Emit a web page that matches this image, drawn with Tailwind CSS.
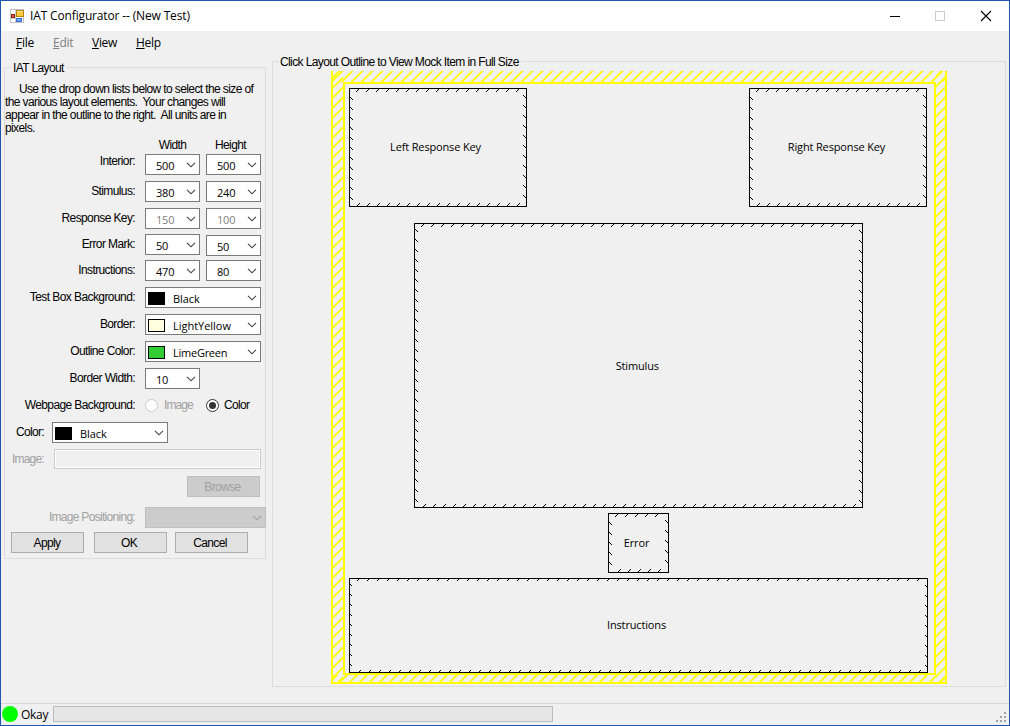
<!DOCTYPE html>
<html lang="en">
<head>
<meta charset="utf-8">
<title>IAT Configurator -- (New Test)</title>
<script src="https://cdn.jsdelivr.net/npm/@tailwindcss/browser@4"></script>
</head>
<body class="w-[1010px] h-[726px] overflow-hidden bg-[#f0f0f0] text-black">
<svg class="hidden">
  <symbol id="chev" viewBox="0 0 10 6"><path d="M1 .8 5 4.8 9 .8" fill="none" stroke="currentColor" stroke-width="1.15"/></symbol>
</svg>
<div class="flex flex-col w-full h-full border border-[#1c56ad]">
  <header class="flex items-center h-[30px] bg-white pl-[9px] shrink-0">
    <svg class="w-[14px] h-[14px] shrink-0" viewBox="0 0 14 14">
      <rect x=".5" y=".5" width="13" height="13" fill="#fff" stroke="#c3c3c3"/>
      <path d="M5.5 1v12M1 9.500h12" stroke="#d0d0d0"/>
      <rect x="6.500" y="1.500" width="7" height="6" fill="#fbc93d" stroke="#b8860b"/>
      <path d="M7 2.500h5" stroke="#ffeeb0"/>
      <rect x="1.500" y="5.500" width="3" height="3" fill="#e0604a" stroke="#8e1d12"/>
      <rect x="6.500" y="9.500" width="5" height="3" fill="#6fa3f5" stroke="#3a6fd0"/>
    </svg>
    <h1 class="ml-[6px] font-['Open_Sans',sans-serif] text-[12px] leading-[16px] tracking-[-0.15px] whitespace-nowrap">IAT Configurator -- (New Test)</h1>
    <svg class="ml-auto mr-[17px] w-[103px] h-[12px]" viewBox="889 9 103 12" shape-rendering="crispEdges">
      <path d="M890 15.500h10" stroke="#000"/>
      <rect x="935.500" y="10.500" width="9" height="9" fill="none" stroke="#ccc"/>
      <path d="M981 10l10 10M991 10l-10 10" stroke="#000" stroke-width="1.100" shape-rendering="auto"/>
    </svg>
  </header>

  <nav class="flex h-[24px] items-center shrink-0 pl-[15px] font-['Open_Sans',sans-serif] text-[12px] leading-[16px] tracking-[-0.28px]">
    <span class="w-[37px]"><u>F</u>ile</span>
    <span class="w-[39px] text-[#808080]"><u>E</u>dit</span>
    <span class="w-[44px]"><u>V</u>iew</span>
    <span><u>H</u>elp</span>
  </nav>

  <main class="flex items-start flex-1 min-h-0 font-['Liberation_Sans',Arial,sans-serif] text-[12px] leading-[13px] tracking-[-0.61px]">
    <fieldset class="ml-[3px] mt-[6px] w-[262px] h-[498px] border border-[#dcdcdc]">
      <legend class="h-[13px] ml-[6px] px-[2px] pt-px">IAT Layout</legend>
      <p class="mt-[9px] whitespace-pre"><span class="pl-[3px]"></span>    Use the drop down lists below to select the size of
the various layout elements.  Your changes will
appear in the outline to the right.  All units are in
pixels.</p>
      <div class="flex mt-[3px] h-[14px] items-center pl-[140px]">
        <span class="w-[55px] text-center">Width</span><span class="w-[61px] text-center">Height</span>
      </div>

      <div class="flex flex-col mt-[2px] gap-[6px]">
        <div class="flex h-[21px] items-center gap-[6px]">
          <label class="w-[134px] text-right pr-[4px] pb-[6px]">Interior:</label>
          <div class="flex items-center w-[55px] h-[21px] bg-white border border-[#7a7a7a] pl-[10px] pr-[3px] font-['Open_Sans',sans-serif] text-[11px] tracking-[-0.2px]"><span class="pt-px">500</span><svg class="ml-auto w-[10px] h-[6px] text-[#444]"><use href="#chev"/></svg></div>
          <div class="flex items-center w-[55px] h-[21px] bg-white border border-[#7a7a7a] pl-[10px] pr-[3px] font-['Open_Sans',sans-serif] text-[11px] tracking-[-0.2px]"><span class="pt-px">500</span><svg class="ml-auto w-[10px] h-[6px] text-[#444]"><use href="#chev"/></svg></div>
        </div>
        <div class="flex h-[21px] items-center gap-[6px]">
          <label class="w-[134px] text-right pr-[4px]">Stimulus:</label>
          <div class="flex items-center w-[55px] h-[21px] bg-white border border-[#7a7a7a] pl-[10px] pr-[3px] font-['Open_Sans',sans-serif] text-[11px] tracking-[-0.2px]"><span class="pt-px">380</span><svg class="ml-auto w-[10px] h-[6px] text-[#444]"><use href="#chev"/></svg></div>
          <div class="flex items-center w-[55px] h-[21px] bg-white border border-[#7a7a7a] pl-[10px] pr-[3px] font-['Open_Sans',sans-serif] text-[11px] tracking-[-0.2px]"><span class="pt-px">240</span><svg class="ml-auto w-[10px] h-[6px] text-[#444]"><use href="#chev"/></svg></div>
        </div>
        <div class="flex h-[21px] items-center gap-[6px] -mb-px">
          <label class="w-[134px] text-right pr-[4px]">Response Key:</label>
          <div class="flex items-center w-[55px] h-[21px] bg-white border border-[#7a7a7a] pl-[10px] pr-[3px] font-['Open_Sans',sans-serif] text-[11px] tracking-[-0.2px] text-[#808080]"><span class="pt-px">150</span><svg class="ml-auto w-[10px] h-[6px] text-[#444]"><use href="#chev"/></svg></div>
          <div class="flex items-center w-[55px] h-[21px] bg-white border border-[#7a7a7a] pl-[10px] pr-[3px] font-['Open_Sans',sans-serif] text-[11px] tracking-[-0.2px] text-[#808080]"><span class="pt-px">100</span><svg class="ml-auto w-[10px] h-[6px] text-[#444]"><use href="#chev"/></svg></div>
        </div>
        <div class="flex h-[21px] items-center gap-[6px] -mb-px">
          <label class="w-[134px] text-right pr-[4px]">Error Mark:</label>
          <div class="flex items-center w-[55px] h-[21px] bg-white border border-[#7a7a7a] pl-[10px] pr-[3px] font-['Open_Sans',sans-serif] text-[11px] tracking-[-0.2px]"><span class="pt-px">50</span><svg class="ml-auto w-[10px] h-[6px] text-[#444]"><use href="#chev"/></svg></div>
          <div class="flex items-center mt-px -mb-px w-[55px] h-[21px] bg-white border border-[#7a7a7a] pl-[10px] pr-[3px] font-['Open_Sans',sans-serif] text-[11px] tracking-[-0.2px]"><span class="pt-px">50</span><svg class="ml-auto w-[10px] h-[6px] text-[#444]"><use href="#chev"/></svg></div>
        </div>
        <div class="flex h-[21px] items-center gap-[6px]">
          <label class="w-[134px] text-right pr-[4px]">Instructions:</label>
          <div class="flex items-center w-[55px] h-[21px] bg-white border border-[#7a7a7a] pl-[10px] pr-[3px] font-['Open_Sans',sans-serif] text-[11px] tracking-[-0.2px]"><span class="pt-px">470</span><svg class="ml-auto w-[10px] h-[6px] text-[#444]"><use href="#chev"/></svg></div>
          <div class="flex items-center w-[55px] h-[21px] bg-white border border-[#7a7a7a] pl-[10px] pr-[3px] font-['Open_Sans',sans-serif] text-[11px] tracking-[-0.2px]"><span class="pt-px">80</span><svg class="ml-auto w-[10px] h-[6px] text-[#444]"><use href="#chev"/></svg></div>
        </div>
        <div class="flex h-[21px] items-center gap-[6px]">
          <label class="w-[134px] text-right pr-[4px] tracking-[-0.58px]">Test Box Background:</label>
          <div class="flex items-center w-[116px] h-[21px] bg-white border border-[#7a7a7a] pl-[2px] pr-[3px] font-['Open_Sans',sans-serif] text-[11px] tracking-[-0.05px]"><i class="w-[17px] h-[13px] mt-px border border-black bg-black mr-[8px]"></i><span class="pt-px">Black</span><svg class="ml-auto w-[10px] h-[6px] text-[#444]"><use href="#chev"/></svg></div>
        </div>
        <div class="flex h-[21px] items-center gap-[6px]">
          <label class="w-[134px] text-right pr-[4px]">Border:</label>
          <div class="flex items-center w-[116px] h-[21px] bg-white border border-[#7a7a7a] pl-[2px] pr-[3px] font-['Open_Sans',sans-serif] text-[11px] tracking-[-0.02px]"><i class="w-[17px] h-[13px] mt-px border border-black bg-[#ffffe0] mr-[8px]"></i><span class="pt-px">LightYellow</span><svg class="ml-auto w-[10px] h-[6px] text-[#444]"><use href="#chev"/></svg></div>
        </div>
        <div class="flex h-[21px] items-center gap-[6px]">
          <label class="w-[134px] text-right pr-[4px]">Outline Color:</label>
          <div class="flex items-center w-[116px] h-[21px] bg-white border border-[#7a7a7a] pl-[2px] pr-[3px] font-['Open_Sans',sans-serif] text-[11px] tracking-[-0.25px]"><i class="w-[17px] h-[13px] mt-px border border-black bg-[#32cd32] mr-[8px]"></i><span class="pt-px">LimeGreen</span><svg class="ml-auto w-[10px] h-[6px] text-[#444]"><use href="#chev"/></svg></div>
        </div>
        <div class="flex h-[21px] items-center gap-[6px]">
          <label class="w-[134px] text-right pr-[4px]">Border Width:</label>
          <div class="flex items-center w-[55px] h-[21px] bg-white border border-[#7a7a7a] pl-[10px] pr-[3px] font-['Open_Sans',sans-serif] text-[11px] tracking-[-0.2px]"><span class="pt-px">10</span><svg class="ml-auto w-[10px] h-[6px] text-[#444]"><use href="#chev"/></svg></div>
        </div>
        <div class="flex h-[21px] items-center">
          <label class="w-[134px] text-right pr-[4px] mr-[6px]">Webpage Background:</label>
          <i class="w-[13px] h-[13px] rounded-full border border-[#ccc] bg-white mb-px"></i>
          <span class="w-[48px] pl-[6px] text-[#a0a0a0] tracking-[-0.9px]">Image</span>
          <i class="flex items-center justify-center w-[13px] h-[13px] rounded-full border border-[#333] bg-white mb-px"><b class="w-[7px] h-[7px] rounded-full bg-[#333]"></b></i>
          <span class="pl-[5px] tracking-[-0.7px]">Color</span>
        </div>
        <div class="flex h-[21px] items-center pl-[11px]">
          <label class="w-[36px] tracking-[-0.7px]">Color:</label>
          <div class="flex items-center w-[116px] h-[21px] bg-white border border-[#7a7a7a] pl-[2px] pr-[3px] font-['Open_Sans',sans-serif] text-[11px] tracking-[-0.05px]"><i class="w-[17px] h-[13px] mt-px border border-black bg-black mr-[8px]"></i><span class="pt-px">Black</span><svg class="ml-auto w-[10px] h-[6px] text-[#444]"><use href="#chev"/></svg></div>
        </div>
        <div class="flex h-[21px] items-center pl-[7px] text-[#a0a0a0]">
          <label class="w-[42px] tracking-[-0.8px]">Image:</label>
          <div class="w-[207px] h-[20px] mb-px bg-[#f0f0f0] border border-[#ccc] ring-1 ring-inset ring-white"></div>
        </div>
        <button class="ml-[182px] w-[73px] h-[21px] bg-[#ccc] border border-[#bfbfbf] text-[#a0a0a0] pr-[2px] pt-px">Browse</button>
        <div class="flex h-[21px] items-center gap-[6px] mt-[4px] -mr-px">
          <label class="w-[134px] text-right pr-[4px] text-[#a0a0a0] tracking-[-0.7px]">Image Positioning:</label>
          <div class="relative flex shrink-0 items-center w-[121px] h-[21px] bg-[#ccc] border border-[#bfbfbf] pr-[3px]"><svg class="ml-auto w-[10px] h-[6px] text-[#a0a0a0]"><use href="#chev"/></svg></div>
        </div>
        <div class="flex h-[21px] pl-[6px] -mt-[2px]">
          <button class="w-[73px] h-[21px] bg-[#e1e1e1] border border-[#adadad] pr-px pt-px">Apply</button>
          <button class="ml-[10px] w-[73px] h-[21px] bg-[#e1e1e1] border border-[#adadad] pr-[3px] pt-px">OK</button>
          <button class="ml-[8px] w-[73px] h-[21px] bg-[#e1e1e1] border border-[#adadad] pr-[3px] pt-px">Cancel</button>
        </div>
      </div>
    </fieldset>

    <fieldset class="ml-[6px] w-[734px] h-[632px] border border-[#dcdcdc]">
      <legend class="h-[13px] ml-[5px] px-[2px] pt-px">Click Layout Outline to View Mock Item in Full Size</legend>
      <svg id="outline" class="block w-[732px] h-[618px] tracking-[-0.15px] font-['Open_Sans',sans-serif] text-[11px]" viewBox="273 68 732 618">
        <defs>
          <clipPath id="cl"><rect x="333" y="71" width="10" height="611"/></clipPath>
          <clipPath id="cr"><rect x="936" y="71" width="9" height="611"/></clipPath>
          <clipPath id="ct"><rect x="333" y="71" width="612" height="11"/></clipPath>
          <clipPath id="cb"><rect x="333" y="675" width="612" height="7"/></clipPath>
        </defs>
        <g stroke="#ff0" stroke-width="1.800" id="hatch"></g>
        <g fill="#ff0">
          <rect x="331" y="71" width="2" height="613"/><rect x="945" y="71" width="2" height="613"/>
          <rect x="331" y="682" width="616" height="2"/>
          <rect x="343" y="82" width="2" height="593"/><rect x="934" y="82" width="2" height="593"/>
          <rect x="343" y="82" width="593" height="2"/><rect x="343" y="673" width="593" height="2"/>
        </g>
        <g id="boxes" fill="none" stroke="#000" shape-rendering="crispEdges"></g>
        <g text-anchor="middle" fill="#000">
          <text x="435.500" y="151">Left Response Key</text>
          <text x="836.500" y="151">Right Response Key</text>
          <text x="637.300" y="370">Stimulus</text>
          <text x="636.500" y="547">Error</text>
          <text x="636.500" y="629">Instructions</text>
        </g>
      </svg>
    </fieldset>
  </main>

  <footer class="flex h-[22px] shrink-0 items-center border-t border-[#d7d7d7] pl-px font-['Open_Sans',sans-serif] text-[12px] tracking-[-0.3px]">
    <i class="w-[16px] h-[16px] mb-px rounded-full bg-[#00ff00]"></i>
    <span class="w-[33px] pl-[3px] leading-[16px]">Okay</span>
    <div class="ml-[2px] mb-px w-[500px] h-[16px] bg-[#e6e6e6] border border-[#bcbcbc]"></div>
    <svg class="ml-auto mr-[3px] mt-[5px] w-[10px] h-[10px]" viewBox="0 0 10 10" fill="#a0a0a0"><path d="M8 0h2v2h-2zM4 4h2v2h-2zM8 4h2v2h-2zM0 8h2v2h-2zM4 8h2v2h-2zM8 8h2v2h-2z"/></svg>
  </footer>
</div>
<script>
const NS = 'http://www.w3.org/2000/svg';
function add(parent, d, clip) {
  const p = document.createElementNS(NS, 'path');
  p.setAttribute('d', d);
  if (clip) p.setAttribute('clip-path', 'url(#' + clip + ')');
  document.getElementById(parent).appendChild(p);
}
// Diagonals of one side of the frame: x + y = phase + 10k.
function hatch(clip, x0, y0, x1, y1, phase) {
  let d = '';
  for (let s = Math.floor((x0 + y0) / 10) * 10 + phase; s < x1 + y1 + 10; s += 10) {
    d += (x1 - x0 < y1 - y0)
      ? `M${x0 - 2} ${s - x0 + 2}L${x1 + 2} ${s - x1 - 2}`
      : `M${s - y0 + 2} ${y0 - 2}L${s - y1 - 2} ${y1 + 2}`;
  }
  add('hatch', d, clip);
}
hatch('cl', 333, 71, 343, 682, 0.5);
hatch('cr', 936, 71, 945, 682, 2.5);
hatch('ct', 333, 71, 945, 82, 3.5);
hatch('cb', 333, 675, 945, 682, 2);
// Box outline with ticks every 10px; t, b, l, r give the first tick of each side, n its length.
function box(x0, y0, x1, y1, t, b, l, r, n) {
  let d = `M${x0 + .5} ${y0 + .5}H${x1 + .5}V${y1 + .5}H${x0 + .5}Z`;
  const dot = (x, y) => { d += `M${x} ${y + .5}h1`; };
  for (let x = t; x + n < x1; x += 10) for (let i = 0; i < n; i++) dot(x - i, y0 + 1 + i);
  for (let x = b; x + n < x1; x += 10) for (let i = 0; i < n; i++) dot(x + i, y1 - 1 - i);
  for (let y = l; y + n < y1; y += 10) for (let i = 0; i < n; i++) dot(x0 + 1 + i, y + i);
  for (let y = r; y + n < y1; y += 10) for (let i = 0; i < n; i++) dot(x1 - 1 - i, y - i);
  add('boxes', d);
}
box(349, 88, 526, 206, 358, 357, 97, 97, 3);
box(749, 88, 926, 206, 758, 757, 97, 97, 3);
box(414, 223, 862, 507, 423, 423, 229, 232, 3);
box(608, 513, 668, 572, 617, 618, 522, 522, 3);
box(349, 578, 927, 672, 358, 359, 584, 586, 2);
</script>
</body>
</html>
